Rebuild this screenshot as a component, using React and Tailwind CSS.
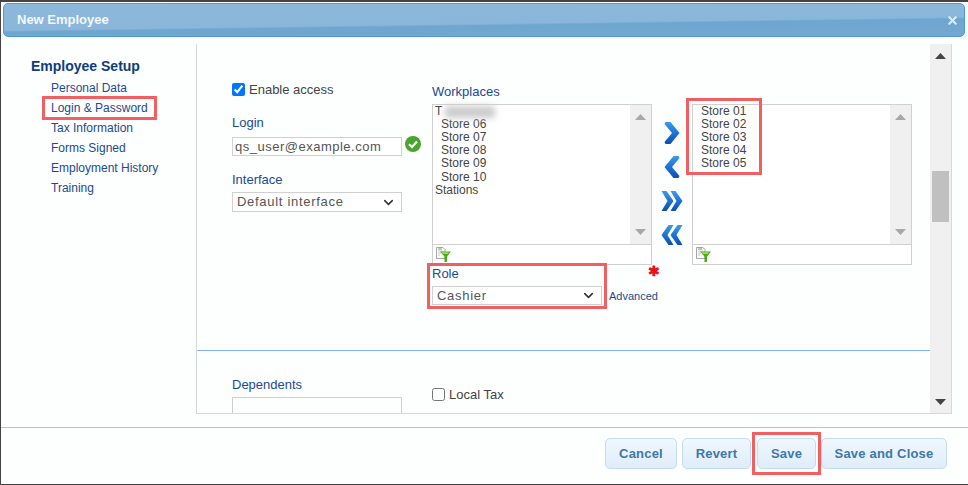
import { ChevronDown, X } from 'lucide-react';

const navItems = ['Personal Data', 'Login & Password', 'Tax Information', 'Forms Signed', 'Employment History', 'Training'];
const rightStores = ['Store 01', 'Store 02', 'Store 03', 'Store 04', 'Store 05'];
const leftStores = ['Store 06', 'Store 07', 'Store 08', 'Store 09', 'Store 10'];

const Triangle = ({ up, className }) => (
  <svg width="11" height="6" viewBox="0 0 11 6" className={className}>
    <path d={up ? 'M0 6 L5.5 0 L11 6 Z' : 'M0 0 L5.5 6 L11 0 Z'} fill="currentColor" />
  </svg>
);

const Scrollbar = () => (
  <div className="flex w-[21px] flex-col items-center justify-between bg-[#f0f0f0] py-[9px] text-[#a8a8a8]">
    <Triangle up />
    <Triangle />
  </div>
);

const FilterIcon = () => (
  <svg width="15" height="15" viewBox="0 0 15 15">
    <path d="M0.5 0.5 H7 L9 2.5 V11.5 H0.5 Z" fill="#fff" stroke="#a5a5a5" />
    <path d="M2 2 H6" stroke="#53b04a" />
    <path d="M2 4 H7 M2 6 H5 M2 8 H4" stroke="#c8c8c8" />
    <path d="M4 4.5 H15 L11 9.5 V15 H8.5 V9.5 Z" fill="#45ad16" />
    <path d="M5.5 5.2 H13 L11.5 7 H7 Z" fill="#9be05c" />
  </svg>
);

const ArrowIcon = ({ id, double, left }) => {
  const single = 'M1 0 L6 0 L15 11 L6 22 L1 22 L0 20 L7.5 11 L0 2 Z';
  const narrow = 'M0 0 L5 0 L12 10 L5 20 L0 20 L6 10 Z';
  return (
    <svg width="22" height="22" viewBox="0 0 22 22" className={left ? '-scale-x-100' : ''}>
      <defs>
        <linearGradient id={id} x1="0" y1="0" x2="0" y2="1">
          <stop offset="0" stopColor="#3f9be8" />
          <stop offset="0.55" stopColor="#1b6fd0" />
          <stop offset="1" stopColor="#0d4fb0" />
        </linearGradient>
      </defs>
      {double ? (
        <g fill={`url(#${id})`}>
          <path d={narrow} transform="translate(0.5 1)" />
          <path d={narrow} transform="translate(9.5 1)" />
        </g>
      ) : (
        <path d={single} transform="translate(3.5 0)" fill={`url(#${id})`} />
      )}
    </svg>
  );
};

const ListBox = ({ children }) => (
  <div className="w-[220px]">
    <div className="flex h-[141px] border border-[#d0d0d0] bg-white">
      <div className="flex-1 pl-[2px] text-[12px] leading-[13px] text-[#444]">{children}</div>
      <Scrollbar />
    </div>
    <div className="flex h-[20px] items-start border border-t-0 border-[#d0d0d0] bg-white pt-[2px] pl-[3px]">
      <FilterIcon />
    </div>
  </div>
);

const Field = ({ children, className }) => (
  <div className={`flex items-center border border-[#d0d0d0] bg-white text-[13px] text-[#555] ${className}`}>
    {children}
  </div>
);

const Label = ({ children, className = '' }) => (
  <div className={`text-[13px] leading-[15px] text-[#1c4a91] ${className}`}>{children}</div>
);

const Button = ({ children, className }) => (
  <button className={`h-[31px] rounded-[5px] border border-[#c3dcf0] bg-[linear-gradient(#f0f7fd,#dfedfa)] text-[13px] font-bold tracking-[0.2px] text-[#3f77a8] ${className}`}>
    {children}
  </button>
);

const App = () => {
  return (
    <div className="flex h-[485px] w-[968px] flex-col overflow-hidden border-t-2 border-b border-l border-[#444] bg-[#fdfefe] font-['Liberation_Sans',Arial,sans-serif]">
      <div className="mt-px ml-[2px] mr-[3px] flex h-[34px] items-center justify-between rounded-[5px] border border-[#4c9bd6] bg-[linear-gradient(179.2deg,#8cb8db_0%,#8ab6da_58%,#6fa6d0_62%,#72a7d1_100%)] pr-[5px] pl-[13px]">
        <span className="text-[13px] font-bold text-[#f4f8fb]">New Employee</span>
        <X size={13} strokeWidth={4} className="text-[#dfeaf3]" />
      </div>

      <div className="mt-[7px] flex h-[370px]">
        <nav className="w-[195px] pt-[14px] pl-[30px]">
          <div className="text-[14px] leading-[16px] font-bold text-[#0f3c80]">Employee Setup</div>
          <ul className="mt-[4px] pl-[20px] text-[12px] leading-[20px] text-[#1c4a91]">
            {navItems.map((item) => (
              <li key={item} className="relative">
                {item}
                {item === 'Login & Password' && (
                  <span className="absolute top-[-2px] left-[-9px] h-[24px] w-[115px] border-[3px] border-[#f25f63]" />
                )}
              </li>
            ))}
          </ul>
        </nav>

        <div className="flex w-[756px] border-r border-b border-l border-[#d8d8d8]">
          <div className="flex-1 overflow-hidden">
            <div className="flex h-[306px] pl-[35px]">
              <div className="w-[200px] pt-[38px]">
                <label className="flex items-center gap-[4px] text-[13px] leading-[15px] text-[#444]">
                  <input type="checkbox" defaultChecked readOnly className="m-0 h-[13px] w-[13px]" />
                  Enable access
                </label>
                <Label className="mt-[18px]">Login</Label>
                <div className="mt-[7px] flex items-center gap-[3px]">
                  <Field className="h-[19px] w-[170px] pl-[2px] tracking-[0.5px]">qs_user@example.com</Field>
                  <svg width="16" height="16" viewBox="0 0 16 16" className="-mt-[6px]">
                    <circle cx="8" cy="8" r="8" fill="#4aa52e" />
                    <path d="M4 8.2 L7 11 L12 5.5" fill="none" stroke="#fff" strokeWidth="2.2" />
                  </svg>
                </div>
                <Label className="mt-[16px]">Interface</Label>
                <Field className="mt-[5px] h-[20px] w-[170px] justify-between pr-[5px] pl-[4px] tracking-[0.7px]">
                  Default interface
                  <ChevronDown size={15} strokeWidth={2.5} className="text-[#333]" />
                </Field>
              </div>

              <div className="pt-[40px]">
                <Label>Workplaces</Label>
                <div className="mt-[5px] flex">
                  <div className="relative w-[220px]">
                    <ListBox>
                      <div className="flex h-[13px] items-center">
                        T
                        <span className="ml-[3px] h-[12px] w-[50px] shrink-0 bg-[#cccccc] blur-[3px]" />
                      </div>
                      <div className="pl-[6px]">
                        {leftStores.map((store) => (
                          <div key={store} className="last:mt-px">{store}</div>
                        ))}
                      </div>
                      <div>Stations</div>
                    </ListBox>
                    <Label className="pt-px">Role</Label>
                    <div className="mt-[5px] flex items-center whitespace-nowrap">
                      <Field className="h-[19px] w-[170px] shrink-0 justify-between pr-[5px] pl-[4px] tracking-[0.7px]">
                        Cashier
                        <ChevronDown size={15} strokeWidth={2.5} className="text-[#333]" />
                      </Field>
                      <span className="mt-px ml-[7px] text-[11px] text-[#1c4a91]">Advanced</span>
                    </div>
                    <span className="absolute top-[159px] left-[-5px] h-[46px] w-[180px] border-[3px] border-[#f25f63]" />
                    <span className="absolute top-[160px] left-[216px] text-[14px] leading-[15px] font-bold text-[#e8101a]">✱</span>
                  </div>
                  <div className="flex w-[40px] flex-col items-center gap-[12px] pt-[18px]">
                    <ArrowIcon id="arrow-right" />
                    <ArrowIcon id="arrow-left" left />
                    <ArrowIcon id="arrow-all-right" double />
                    <ArrowIcon id="arrow-all-left" double left />
                  </div>
                  <div className="relative">
                    <ListBox>
                      <div className="pl-[6px]">
                        {rightStores.map((store) => (
                          <div key={store}>{store}</div>
                        ))}
                      </div>
                    </ListBox>
                    <span className="absolute top-[-6px] left-[-6px] h-[77px] w-[76px] border-[3px] border-[#f25f63]" />
                  </div>
                </div>
              </div>
            </div>

            <div className="border-t border-[#82b4f5]" />

            <div className="flex pt-[26px] pl-[35px]">
              <div className="w-[200px]">
                <Label>Dependents</Label>
                <div className="mt-[5px] h-[20px] w-[170px] border border-[#d0d0d0]" />
              </div>
              <label className="mt-[10px] flex h-[15px] items-center gap-[4px] text-[13px] text-[#444]">
                <input type="checkbox" readOnly className="m-0 h-[13px] w-[13px]" />
                Local Tax
              </label>
            </div>
          </div>

          <div className="flex w-[21px] flex-col items-center bg-[#f0f0f0] pt-[9px] pb-[8px] text-[#444]">
            <Triangle up />
            <div className="mt-[112px] h-[51px] w-[17px] bg-[#c0c0c0]" />
            <Triangle className="mt-auto" />
          </div>
        </div>
      </div>

      <div className="mt-[13px] border-t border-[#a9c8e0]" />

      <div className="flex justify-end gap-[5px] pt-[10px] pr-[21px]">
        <Button className="w-[72px]">Cancel</Button>
        <Button className="w-[69px]">Revert</Button>
        <div className="relative ml-[1px]">
          <Button className="w-[59px]">Save</Button>
          <span className="absolute top-[-6px] left-[-5px] h-[43px] w-[69px] border-[3px] border-[#f25f63]" />
        </div>
        <Button className="w-[126px]">Save and Close</Button>
      </div>
    </div>
  );
};

export default App;
